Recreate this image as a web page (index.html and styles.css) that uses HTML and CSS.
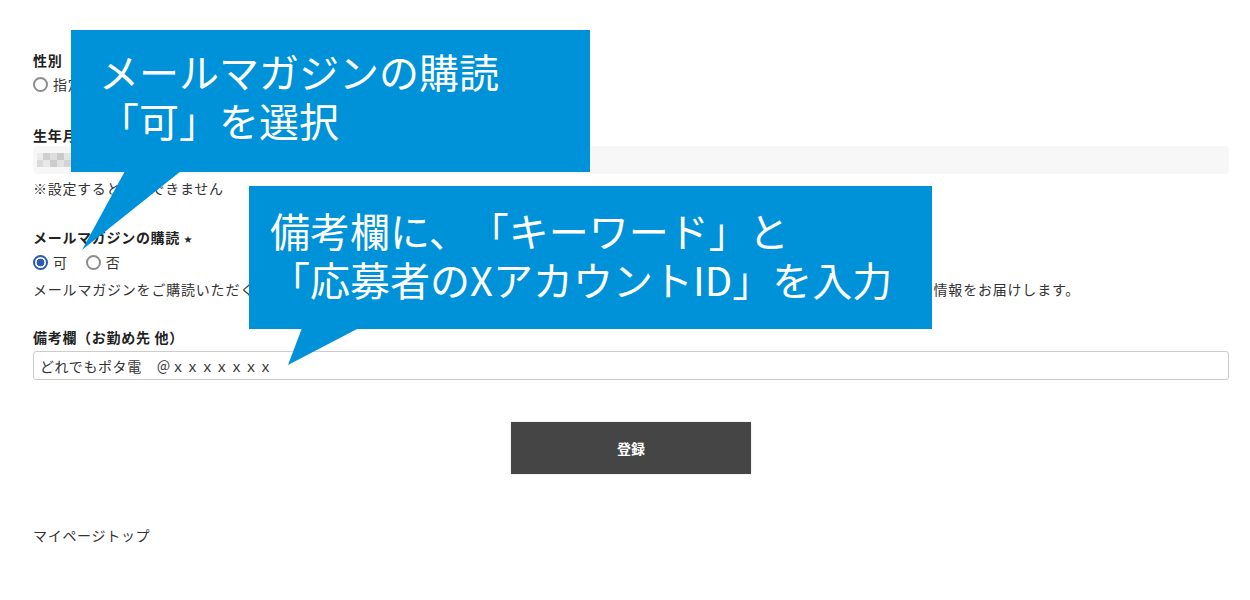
FILE: index.html
```html
<!DOCTYPE html>
<html lang="ja">
<head>
<meta charset="UTF-8">
<meta name="viewport" content="width=device-width, initial-scale=1.0">
<title>会員情報登録</title>
<link rel="stylesheet" href="styles.css">
</head>
<body>
  <div class="page">
    <form class="form" onsubmit="return false;">
      <div class="field field-first">
        <div class="label">性別</div>
        <div class="radios">
          <label class="radio"><input type="radio" name="gender" value="0">指定しない</label>
        </div>
      </div>

      <div class="field">
        <div class="label">生年月日</div>
        <div class="birth"><span class="mosaic"></span></div>
        <p class="note">※設定すると変更できません</p>
      </div>

      <div class="field field-mail">
        <div class="label">メールマガジンの購読 <span class="req">★</span></div>
        <div class="radios">
          <label class="radio"><input type="radio" name="mail" value="1" checked>可</label>
          <label class="radio"><input type="radio" name="mail" value="0">否</label>
        </div>
        <p class="desc">メールマガジンをご購読いただくと、新商品のご案内やセール・キャンペーンのお知らせ、各種イベント情報など、会員様限定のお得な情報をお届けします。</p>
      </div>

      <div class="field field-note">
        <div class="label">備考欄（お勤め先 他）</div>
        <input class="text" type="text" name="note" value="どれでもポタ電　＠ｘｘｘｘｘｘｘ">
      </div>

      <button class="submit" type="submit">登録</button>
    </form>

    <a class="back" href="#">マイページトップ</a>

    <!-- 説明用の吹き出し -->
    <div class="callout callout-mail">メールマガジンの購読<br>「可」を選択</div>
    <div class="callout callout-note">備考欄に、「キーワード」と<br>「応募者のXアカウントID」を入力</div>
  </div>
</body>
</html>
```

FILE: styles.css
```css
body {
  margin: 0;
  padding: 0;
  background: #fff;
  color: #333;
  font-family: "Noto Sans CJK JP", "Noto Sans", sans-serif;
  font-size: 14px;
  letter-spacing: 0.7px;
  text-spacing-trim: space-all;
}

.page {
  position: relative;
  padding: 0 21px 40px 33px;
  height: 560px;
}

.field {
  margin-top: 28px;
}
.field-first {
  margin-top: 0;
  padding-top: 49px;
}
.field-mail {
  margin-top: 26px;
}
.field-note {
  margin-top: 25px;
}

.label {
  font-weight: bold;
  color: #222;
  line-height: 22px;
}
.req {
  font-size: 8px;
  vertical-align: 1px;
}

.radios {
  display: flex;
  gap: 18px;
  line-height: 24px;
}
.field-first .radios {
  margin-top: 1px;
}
.radio {
  display: flex;
  align-items: center;
  gap: 5px;
}
.radio input {
  appearance: none;
  margin: 0;
  width: 15px;
  height: 15px;
  box-sizing: border-box;
  border: 2px solid #8c8c8c;
  border-radius: 50%;
  background: #fff;
}
.radio input:checked {
  border-color: #2b5cb0;
  background: radial-gradient(circle, #2b5cb0 0 3.6px, #fff 4.2px);
}

.birth {
  height: 28px;
  background: #f7f7f7;
  border-radius: 4px;
  display: flex;
  align-items: center;
  padding-left: 4px;
}
.mosaic {
  width: 34px;
  height: 14px;
  background:
    linear-gradient(90deg, #ececec 0 6px, #d0d0d0 6px 13px, #dedede 13px 20px, #c9c9c9 20px 27px, #e4e4e4 27px 34px) top / 34px 7px no-repeat,
    linear-gradient(90deg, #dadada 0 6px, #e8e8e8 6px 13px, #cccccc 13px 20px, #e2e2e2 20px 27px, #d4d4d4 27px 34px) bottom / 34px 7px no-repeat;
  filter: blur(0.6px);
}

.note,
.desc {
  margin: 2px 0 0;
  line-height: 24px;
}
.desc {
  margin-top: 3px;
  white-space: nowrap;
  letter-spacing: 0.8px;
}

.text {
  display: block;
  width: 100%;
  box-sizing: border-box;
  height: 29px;
  margin-top: 3px;
  padding: 0 6px;
  border: 1px solid #ccc;
  border-radius: 3px;
  font-family: inherit;
  font-size: 14px;
  letter-spacing: 0.6px;
  color: #333;
}

.submit {
  display: block;
  width: 240px;
  height: 52px;
  margin: 42px auto 0;
  border: none;
  background: #454545;
  color: #fff;
  font-family: inherit;
  font-size: 14px;
  font-weight: bold;
  box-shadow: 0 0 2px rgba(0, 0, 0, 0.15);
  cursor: pointer;
}

.back {
  display: inline-block;
  margin-top: 49px;
  line-height: 24px;
  color: #333;
  text-decoration: none;
}

/* 吹き出し */
.callout {
  position: absolute;
  background: #0092d9;
  color: #fff;
  font-size: 40px;
  line-height: 49px;
  letter-spacing: 0;
  white-space: nowrap;
  box-sizing: border-box;
}
.callout::after {
  content: "";
  position: absolute;
  left: 0;
  background: #0092d9;
}

.callout-mail {
  left: 71px;
  top: 30px;
  width: 519px;
  height: 142px;
  padding: 17px 0 0 28px;
}
.callout-mail::after {
  top: 141px;
  width: 120px;
  height: 80px;
  clip-path: polygon(54px 0, 110px 0, 11px 79px);
}

.callout-note {
  left: 249px;
  top: 186px;
  width: 683px;
  height: 143px;
  padding: 20px 0 0 21px;
}
.callout-note::after {
  top: 142px;
  width: 120px;
  height: 40px;
  clip-path: polygon(53px 0, 110px 0, 39px 37px);
}
```
